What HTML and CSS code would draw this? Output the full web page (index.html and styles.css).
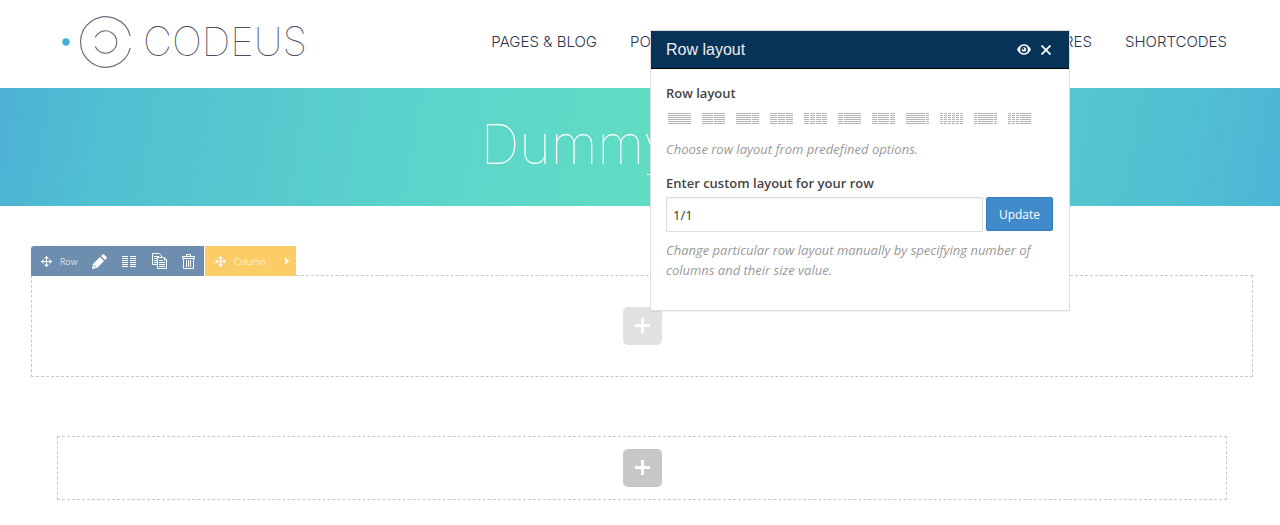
FILE: index.html
```html
<!DOCTYPE html>
<html lang="en">
<head>
<meta charset="utf-8">
<title>Codeus</title>
<link rel="stylesheet" href="styles.css">
</head>
<body>
<svg class="defs" aria-hidden="true">
  <symbol id="lines" viewBox="0 0 23 11"><path d="M0 .5h23M0 2.5h23M0 4.5h23M0 6.5h23M0 8.5h23M0 10.5h23" stroke="#b3b3b3"/></symbol>
  <symbol id="move" viewBox="0 0 11 11"><path d="M5.500 0v11M0 5.500h11" fill="none" stroke="currentColor"/><path d="M5.500 0l2.500 2.500H3zM5.500 11L3 8.500h5zM0 5.500L2.500 3v5zM11 5.500L8.500 8V3z" fill="currentColor"/></symbol>
  <symbol id="plus" viewBox="0 0 15 15"><path d="M7.500 0v15M0 7.500h15" stroke="#fff" stroke-width="3"/></symbol>
</svg>

<header class="site-header">
  <a class="logo" href="#">
    <svg class="logo-mark" width="70" height="54" viewBox="0 0 70 54" aria-hidden="true">
      <circle cx="4" cy="27" r="3.700" fill="#46addb"/>
      <path d="M68.200 20.800A25.200 25.200 0 1 0 68.200 33.200M33.300 22.500A11.200 11.200 0 1 1 33.300 31.500" fill="none" stroke="#6e6e80" stroke-width="1.200"/>
    </svg>
    <span class="logo-text">CODEUS</span>
  </a>
  <nav class="nav">
    <a href="#">PAGES &amp; BLOG</a>
    <a href="#">PORTFOLIO</a>
    <a class="nav-end" href="#">FEATURES</a>
    <a href="#">SHORTCODES</a>
  </nav>
</header>

<section class="banner"><h1>Dummy Page</h1></section>

<main class="builder">
  <div class="controls">
    <div class="group group-row">
      <button class="move" type="button"><svg width="11" height="11"><use href="#move"/></svg>Row</button>
      <button type="button" aria-label="Edit row"><svg width="15" height="15" viewBox="0 0 15 15"><path d="M0 15l1-5 7-7 4 4-7 7zM9 2l1.500-1.500q.800-.800 1.600 0l2.400 2.400q.800.800 0 1.600L13 6z" fill="currentColor"/><path d="M1.500 11l2.500 2.500" stroke="#6e8eaf"/></svg></button>
      <button type="button" aria-label="Change layout"><svg width="15" height="11" viewBox="0 0 15 11"><path d="M0 .5h6M8 .5h6M0 2.500h6M8 2.500h6M0 4.500h6M8 4.500h6M0 6.500h6M8 6.500h6M0 8.500h6M8 8.500h6M0 10.500h6M8 10.500h6" stroke="currentColor"/></svg></button>
      <button type="button" aria-label="Clone row"><svg width="15" height="16" viewBox="0 0 15 16"><path d="M5.500 11.500h-5V.5h7l2 2v2M2 3.500h5M2 5.500h3M2 7.500h3M2 9.500h3M5.500 4.500h7l2 2v9h-9zM7 7.500h4M7 9.500h6M7 11.500h6M7 13.500h6M12.500 5v2H14" fill="none" stroke="currentColor"/></svg></button>
      <button type="button" aria-label="Delete row"><svg width="13" height="15" viewBox="0 0 13 15"><path d="M4.500 2V.5h4V2M.5 4.500v-2h12v2zM1.500 5v9.500h10V5M4.500 6v7M6.500 6v7M8.500 6v7" fill="none" stroke="currentColor"/></svg></button>
    </div>
    <div class="group group-column">
      <button class="move" type="button"><svg width="11" height="11"><use href="#move"/></svg>Column</button>
      <button type="button" aria-label="Expand"><svg width="4" height="8" viewBox="0 0 4 8"><path d="M0 0l4 4-4 4z" fill="currentColor"/></svg></button>
    </div>
  </div>
  <div class="row-area">
    <button class="add faded" type="button" aria-label="Add element"><svg width="15" height="15"><use href="#plus"/></svg></button>
  </div>
  <div class="new-row">
    <button class="add" type="button" aria-label="Add element"><svg width="15" height="15"><use href="#plus"/></svg></button>
  </div>
</main>

<div class="panel" role="dialog" aria-labelledby="panel-title">
  <div class="panel-head">
    <h2 id="panel-title">Row layout</h2>
    <button type="button" aria-label="Toggle opacity"><svg width="14" height="11" viewBox="0 0 14 11"><path d="M0 5.500C3.500-1.500 10.500-1.500 14 5.500 10.500 12.500 3.500 12.500 0 5.500z" fill="#fff"/><circle cx="7" cy="5.500" r="3.800" fill="#083358"/><circle cx="7" cy="5.500" r="2.200" fill="#fff"/><circle cx="6.300" cy="4.800" r="1" fill="#083358"/></svg></button>
    <button type="button" aria-label="Close"><svg width="10" height="10" viewBox="0 0 10 10"><path d="M.5.5l9 9M9.500.5l-9 9" stroke="#fff" stroke-width="1.800"/></svg></button>
  </div>
  <form class="panel-body">
    <h3>Row layout</h3>
    <div class="layouts">
      <button type="button" aria-label="1/1"><svg width="23" height="11"><use href="#lines"/></svg></button>
      <button type="button" aria-label="1/2 + 1/2"><svg width="23" height="11"><use href="#lines"/><path d="M11.500 0v11"/></svg></button>
      <button type="button" aria-label="2/3 + 1/3"><svg width="23" height="11"><use href="#lines"/><path d="M15.500 0v11"/></svg></button>
      <button type="button" aria-label="1/3 + 1/3 + 1/3"><svg width="23" height="11"><use href="#lines"/><path d="M7.500 0v11M15.500 0v11"/></svg></button>
      <button type="button" aria-label="1/4 + 1/4 + 1/4 + 1/4"><svg width="23" height="11"><use href="#lines"/><path d="M5.500 0v11M11.500 0v11M17.500 0v11"/></svg></button>
      <button type="button" aria-label="1/4 + 3/4"><svg width="23" height="11"><use href="#lines"/><path d="M5.500 0v11"/></svg></button>
      <button type="button" aria-label="1/4 + 1/2 + 1/4"><svg width="23" height="11"><use href="#lines"/><path d="M5.500 0v11M17.500 0v11"/></svg></button>
      <button type="button" aria-label="5/6 + 1/6"><svg width="23" height="11"><use href="#lines"/><path d="M19.500 0v11"/></svg></button>
      <button type="button" aria-label="1/6 six times"><svg width="23" height="11"><use href="#lines"/><path d="M3.500 0v11M7.500 0v11M11.500 0v11M15.500 0v11M19.500 0v11"/></svg></button>
      <button type="button" aria-label="1/6 + 4/6 + 1/6"><svg width="23" height="11"><use href="#lines"/><path d="M3.500 0v11M19.500 0v11"/></svg></button>
      <button type="button" aria-label="1/6 + 1/6 + 1/6 + 1/2"><svg width="23" height="11"><use href="#lines"/><path d="M3.500 0v11M7.500 0v11M11.500 0v11"/></svg></button>
    </div>
    <p>Choose row layout from predefined options.</p>
    <label for="custom">Enter custom layout for your row</label>
    <div class="field">
      <input id="custom" type="text" value="1/1">
      <button type="button">Update</button>
    </div>
    <p>Change particular row layout manually by specifying number of columns and their size value.</p>
  </form>
</div>
</body>
</html>
```

FILE: styles.css
```css
* { box-sizing: border-box; }
body { margin: 0; background: #fff; font-family: "Open Sans", sans-serif; font-size: 13px; color: #444; position: relative; }
button { border: 0; padding: 0; background: none; color: inherit; font: inherit; cursor: pointer; }
svg { display: block; flex: none; }
a { text-decoration: none; color: inherit; }
.defs { position: absolute; width: 0; height: 0; }

.site-header { display: flex; justify-content: space-between; align-items: center; height: 88px; padding: 0 53px 4px 62px; }
.logo { display: flex; align-items: center; gap: 11px; }
.logo-text { font: 100 40px/48px Inter, sans-serif; color: #4c4c60; }
.nav { display: flex; gap: 33px; font: 300 15px/24px Inter, sans-serif; color: #2c3350; }
.nav-end { margin-left: 270px; }

.banner { height: 118px; background: linear-gradient(100deg, #4db0d4 0%, #50bfd2 8%, #5dd5ca 36%, #60dcc4 50%, #5dd5ca 64%, #50bfd2 92%, #4db4d6 100%); }
.banner h1 { margin: 0; padding-left: 12px; text-align: center; font: 100 54px/114px Inter, sans-serif; color: #fff; }

.builder { padding: 40px 27px 25px 31px; }
.controls { position: relative; display: flex; gap: 1px; margin-bottom: -1px; font-size: 9px; font-weight: 300; color: #fff; }
.group { display: flex; align-items: center; height: 30px; padding: 0 9px 0 10px; }
.group-row { gap: 15px; background: #6e8eaf; border-radius: 3px 0 0 0; }
.group-column { gap: 19px; padding-right: 7px; background: #fccc66; }
.move { display: flex; align-items: center; gap: 8px; }

.row-area, .new-row { display: flex; justify-content: center; border: 1px dashed #c8c8c8; }
.row-area { padding: 31px 0; }
.new-row { margin: 59px 26px 0; padding: 12px 0; }
.add { display: grid; place-items: center; width: 39px; height: 38px; padding-bottom: 1px; border-radius: 5px; background: #c8c8c8; }
.faded { background: #e2e2e2; }

.panel { position: absolute; top: 30px; left: 650px; width: 420px; border: 1px solid #ddd; background: #fff; box-shadow: 0 1px 1px rgba(0, 0, 0, .04); }
.panel-head { display: flex; align-items: center; gap: 10px; height: 38px; padding: 0 18px 0 15px; background: #083358; border-bottom: 1px solid #000; }
.panel-head h2 { flex: 1; margin: 0; font: 400 16px/20px "Liberation Sans", Arial, sans-serif; color: #eee; }
.panel-body { padding: 14px 16px 30px 15px; }
.panel-body h3, .panel-body label { display: block; margin: 0; font-size: 13px; font-weight: 600; line-height: 20px; }
.layouts { display: flex; gap: 11px; padding: 10px 2px 0; }
.layouts path { stroke: #fff; }
.panel-body p { margin: 0; font-size: 13px; font-style: italic; line-height: 20px; color: #999; }
.layouts + p { margin: 15px 0 14px; }
.field { display: flex; gap: 3px; margin: 4px 0 8px; align-items: flex-start; }
.field input { flex: 1; min-width: 0; height: 35px; padding: 0 6px; border: 1px solid #ddd; box-shadow: inset 0 1px 2px rgba(0, 0, 0, .07); font: 13px "Open Sans", sans-serif; color: #333; }
.field button { width: 67px; height: 34px; border: 1px solid #337dbe; border-radius: 2px; background: #428bca; color: #fff; font-size: 12px; }
```
